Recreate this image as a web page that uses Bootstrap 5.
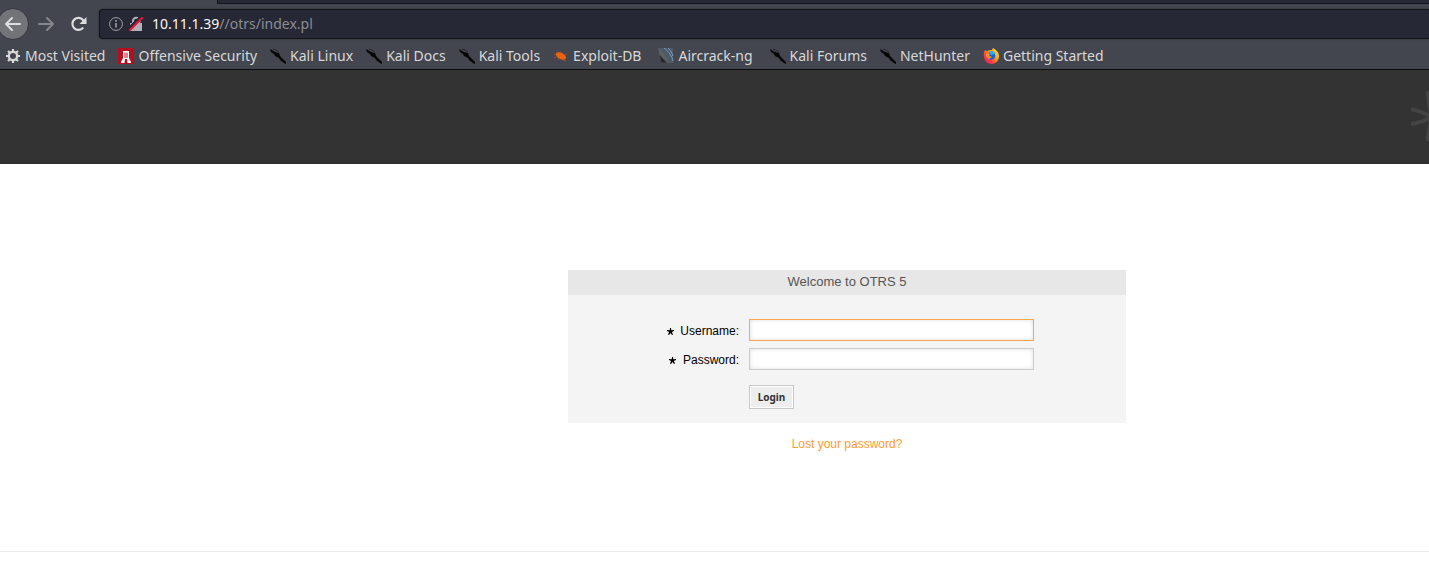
<!DOCTYPE html>
<html lang="en">
<head>
<meta charset="utf-8">
<meta name="viewport" content="width=device-width, initial-scale=1">
<title>Login - OTRS</title>
<link href="https://cdn.jsdelivr.net/npm/bootstrap@5.3.0/dist/css/bootstrap.min.css" rel="stylesheet">
<style>
body{font-family:"Liberation Sans",Arial,sans-serif;font-size:12px;line-height:16px;color:#000;background:#fff;overflow-x:hidden}
svg{display:block;flex:none}
.chrome{background:#43464e;font-family:"Noto Sans",sans-serif;font-size:14px;line-height:20px;border-bottom:1px solid #0c0c0d}
.tabstrip{height:4px}
.active-tab{width:217px}
.other-tabs{background:#262835;border-left:1px solid #14151c;border-bottom:1px solid #14151c}
.toolbar-row{height:40px}
.tool{border:0;padding:0;background:none;color:#dededf}
.tool:disabled{color:#85878b}
.back{width:32px;height:32px;border-radius:50%;background:#727479;border:1px solid #35373d;margin-left:-3px}
.urlbar{height:30px;background:#262835;border:1px solid #14151c;border-right:0;border-radius:4px 0 0 4px;margin-left:12px;padding-left:9px;color:#8b8d93;box-shadow:0 0 2px #2b2d34}
.urlbar b{font-weight:400;color:#f9f9fa}
.bookmarks{height:25px;gap:13px;padding-left:5px;padding-bottom:2px}
.bookmarks a{gap:4px;color:#d8d8d9;white-space:nowrap}
.brandbar{height:94px;background:#333;border-bottom:2px solid #303030}
.login-area{padding:106px 0 99px 265px}
.login-box{width:558px;background:#f4f4f4}
.login-box h1{font-size:13px;line-height:23px;height:25px;background:#e7e7e7;color:#555;margin:0}
.login-form{padding:24px 92px 14px 0}
.field-row{margin-bottom:7px}
.field-row label{width:171px;text-align:right;padding-top:2px}
.login-form .form-control{width:285px;height:22px;min-height:0;padding:2px 4px;font-size:12px;border:1px solid #ccc;border-radius:0;background:#fff;box-shadow:inset 0 0 4px #ddd}
.login-form .form-control.current{border-color:#ffa74a}
.login-btn{width:45px;height:24px;margin:15px 0 0 181px;padding:0;font:bold 10px/16px "Noto Sans",sans-serif;color:#333;background:#ededed;border:1px solid #c8c8c8;border-radius:0;box-shadow:inset 0 0 0 1px #fff}
.lost{color:#ff9b2f;margin-top:13px}
.page-foot{border-top:1px solid #ebebeb;height:21px}
</style>
</head>
<body>
<svg width="0" height="0" class="position-absolute" aria-hidden="true">
<symbol id="kali" viewBox="0 0 16 16"><path fill="#050505" d="M0 1l5 3 4 1 1 3 2 2 4 4v2l-2-1-4-3-1-2-4-2-1-2-3-2z"/><path d="M3 1l3 1 3 2" stroke="#292a2e" fill="none"/></symbol>
<symbol id="star" viewBox="0 0 7 7"><path fill="#000" d="M3 0h1l.3 2.200L7 2v1L4.900 4 6 6.400l-1 .6-1.500-2L2 7l-1-.6L2.100 4 0 3V2l2.700.2z"/></symbol>
</svg>
<header class="chrome">
  <div class="tabstrip d-flex"><div class="active-tab"></div><div class="other-tabs flex-grow-1"></div></div>
  <div class="toolbar-row d-flex align-items-center">
    <button class="tool back d-flex align-items-center justify-content-center" aria-label="Back"><svg width="18" height="16" viewBox="0 0 18 16" fill="none" stroke="currentColor" stroke-width="2" stroke-linecap="round" stroke-linejoin="round"><path d="M16 8H2M8 2L2 8l6 6"/></svg></button>
    <button class="tool ms-2" disabled aria-label="Forward"><svg width="18" height="16" viewBox="0 0 18 16" fill="none" stroke="currentColor" stroke-width="2" stroke-linecap="round" stroke-linejoin="round"><path d="M2 8h14M10 2l6 6-6 6"/></svg></button>
    <button class="tool ms-3" aria-label="Reload"><svg width="16" height="16" viewBox="0 0 16 16"><path d="M11.600 12.200A6 6 0 1 1 12 4" fill="none" stroke="currentColor" stroke-width="2.200" stroke-linecap="round"/><path fill="currentColor" d="M15.500 1v7h-7z"/></svg></button>
    <div class="urlbar d-flex align-items-center flex-grow-1">
      <svg width="14" height="14" viewBox="0 0 14 14" fill="none" stroke="#a0a1a6"><circle cx="7" cy="7" r="6.400"/><path stroke-width="1.600" d="M7 6v4.600M7 3v1.700"/></svg>
      <svg class="ms-1" width="17" height="16" viewBox="0 0 17 16"><path d="M6 8V5a3.200 3.200 0 0 1 6.400 0v3" fill="none" stroke="#b1b1b5" stroke-width="2"/><path fill="#b1b1b5" d="M3 7h12v8H3z"/><path stroke="#262835" stroke-width="3" d="M1 13L14 1"/><path stroke="#e4123c" stroke-width="2.200" stroke-linecap="round" d="M3 14L15 2"/></svg>
      <span class="ms-2"><b>10.11.1.39</b>//otrs/index.pl</span>
    </div>
  </div>
  <nav class="bookmarks d-flex align-items-center" aria-label="Bookmarks">
    <a href="#" class="d-flex align-items-center text-decoration-none"><svg width="16" height="16" viewBox="0 0 16 16" fill="none" stroke="currentColor"><circle cx="8" cy="8" r="4.200" stroke-width="2.400"/><path stroke-width="2.200" d="M8 1v2M8 13v2M1 8h2M13 8h2M3 3l1.500 1.500M11.500 11.500L13 13M13 3l-1.500 1.500M4.500 11.500L3 13"/></svg>Most Visited</a>
    <a href="#" class="d-flex align-items-center text-decoration-none"><svg width="16" height="16" viewBox="0 0 16 16"><path fill="#b50e20" d="M0 0h16v16H0z"/><path fill="#fff" d="M5 3h6v7l2 4v1H9.500l-.5-4H7l-.5 4H3v-1l2-4z"/><path fill="#b50e20" d="M6.500 4.500h1V10h-1zM8.500 4.500h1V10h-1z"/></svg>Offensive Security</a>
    <a href="#" class="d-flex align-items-center text-decoration-none"><svg width="16" height="16"><use href="#kali"/></svg>Kali Linux</a>
    <a href="#" class="d-flex align-items-center text-decoration-none"><svg width="16" height="16"><use href="#kali"/></svg>Kali Docs</a>
    <a href="#" class="d-flex align-items-center text-decoration-none"><svg width="16" height="16"><use href="#kali"/></svg>Kali Tools</a>
    <a href="#" class="d-flex align-items-center text-decoration-none me-1"><svg width="16" height="16" viewBox="0 0 16 16"><ellipse cx="8" cy="8" rx="5.500" ry="3.200" fill="#ee610f" transform="rotate(28 8 8)"/><path d="M5 6L3 4M8 5V4M3 9l-2 1M6 11l-1 1M10 12l3 1M12 7l2-1M1 6l3 1" stroke="#bd5929" stroke-width=".7"/></svg>Exploit-DB</a>
    <a href="#" class="d-flex align-items-center text-decoration-none me-1"><svg width="16" height="16" viewBox="0 0 16 16"><path fill="#4c5a66" d="M0 0h15v15H9z"/><path d="M6 0c5 4 8 8 9 13M10 0c3 3 4 5 5 8" stroke="#7f9ac1" fill="none"/><path d="M0 0c5 4 9 9 10 15L3 13z" fill="#5b6164"/><path d="M2 7l7 8-6-1z" fill="#26292a"/></svg>Aircrack-ng</a>
    <a href="#" class="d-flex align-items-center text-decoration-none"><svg width="16" height="16"><use href="#kali"/></svg>Kali Forums</a>
    <a href="#" class="d-flex align-items-center text-decoration-none"><svg width="16" height="16"><use href="#kali"/></svg>NetHunter</a>
    <a href="#" class="d-flex align-items-center text-decoration-none"><svg width="16" height="16" viewBox="0 0 16 16"><defs><linearGradient id="fx" x1="1" y1="0" x2="0" y2="1"><stop stop-color="#fff044"/><stop offset=".4" stop-color="#ff9b18"/><stop offset=".7" stop-color="#ff3746"/><stop offset="1" stop-color="#e31587"/></linearGradient></defs><path fill="url(#fx)" d="M1 4l1-2 2 1c2-1 3-1 5-1l1-2c4 2 6 5 6 8a7.500 7.500 0 0 1-15 1c0-2-.500-3 0-5z"/><path fill="#1464d8" d="M6 4c4-2 7 1 6 5-1 3-5 4-7 1l3-1-2-1z"/><path fill="#20b4f5" d="M6 4c2-2 5-1 6 2L8 7z"/><path fill="#ff8c20" d="M3 5l4 1-1 2 3 1-3 2-3-2z"/></svg>Getting Started</a>
  </nav>
</header>
<div class="brandbar d-flex justify-content-end align-items-start overflow-hidden">
  <svg width="19" height="94" viewBox="0 0 19 94" fill="none" stroke="#444" stroke-width="4" aria-hidden="true"><path d="M1 39Q11 41 22 47Q11 53 1 54M18 21Q18 34 22 47Q18 60 18 71"/></svg>
</div>
<main class="login-area d-flex flex-column align-items-center">
  <section class="login-box">
    <h1 class="text-center fw-normal">Welcome to OTRS 5</h1>
    <form class="login-form">
      <div class="field-row d-flex align-items-center"><label for="user"><svg class="d-inline" width="7" height="7" aria-hidden="true"><use href="#star"/></svg>&nbsp; Username:</label><input id="user" class="form-control current ms-auto" type="text"></div>
      <div class="field-row d-flex align-items-center"><label for="pass"><svg class="d-inline" width="7" height="7" aria-hidden="true"><use href="#star"/></svg>&nbsp; Password:</label><input id="pass" class="form-control ms-auto" type="password"></div>
      <button class="login-btn d-block" type="submit">Login</button>
    </form>
  </section>
  <a href="#" class="lost text-decoration-none">Lost your password?</a>
</main>
<footer class="page-foot"></footer>
<script src="https://cdn.jsdelivr.net/npm/bootstrap@5.3.0/dist/js/bootstrap.bundle.min.js"></script>
</body>
</html>
